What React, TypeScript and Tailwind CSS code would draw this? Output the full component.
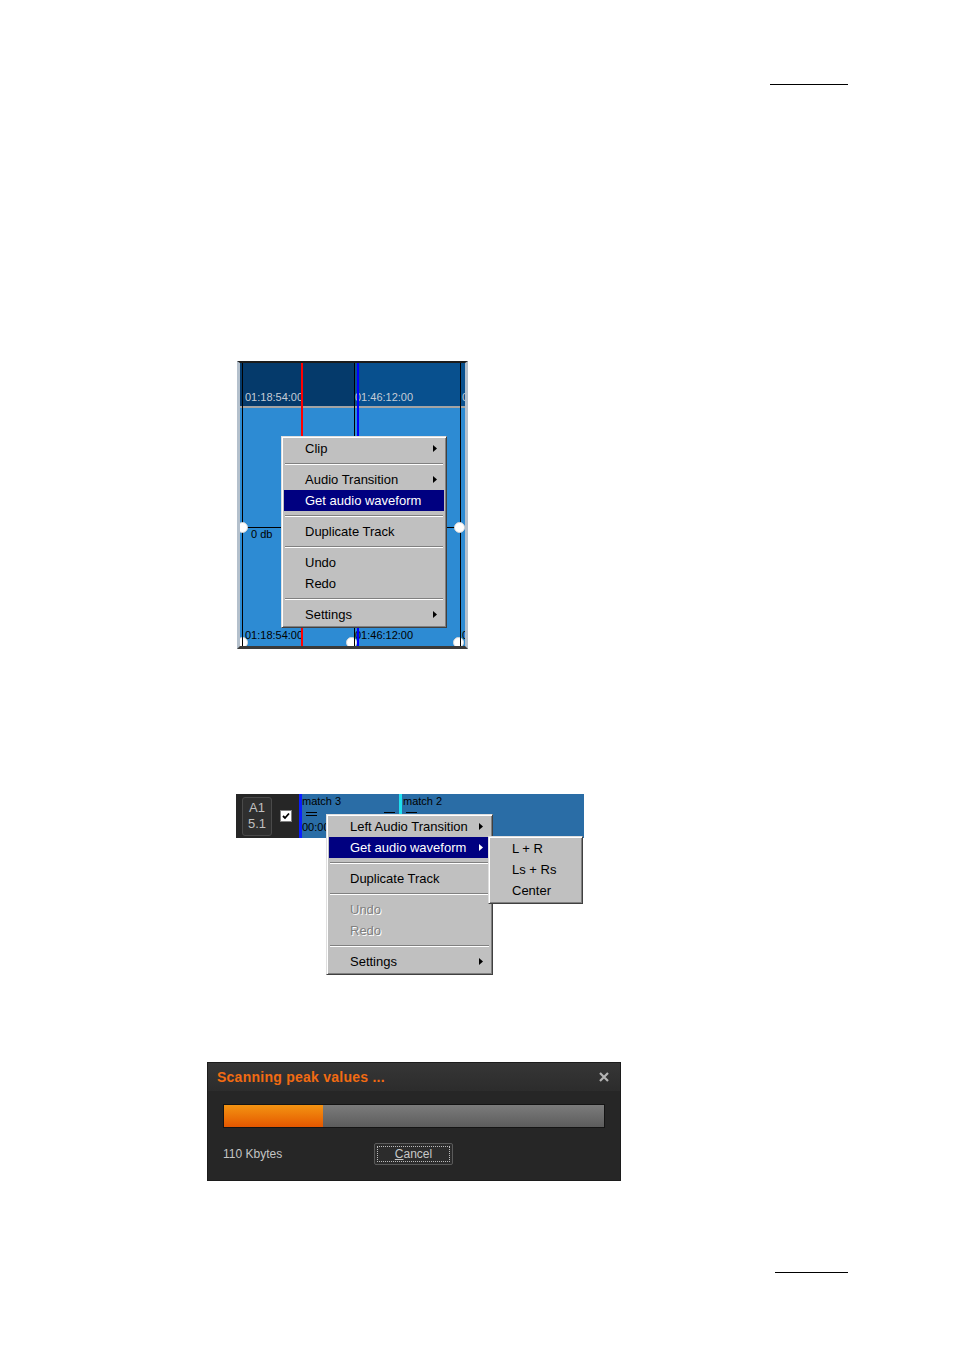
type Item = { label: string; sub?: boolean; active?: boolean; disabled?: boolean } | "sep";

function Arrow() {
  return (
    <svg width="4" height="7" viewBox="0 0 4 7" className="shrink-0">
      <path d="M0 0L4 3.5L0 7Z" fill="currentColor" />
    </svg>
  );
}

// windows-classic popup menu
function Menu({ items, className }: { items: Item[]; className: string }) {
  return (
    <div
      className={`absolute bg-[#c0c0c0] border border-[#dfdfdf] border-r-[#404040] border-b-[#404040] shadow-[inset_1px_1px_0_#ffffff,inset_-1px_-1px_0_#808080] px-[2px] pt-px pb-[2px] ${className}`}
    >
      {items.map((it, i) =>
        it === "sep" ? (
          <div key={i} className="h-[10px] flex flex-col justify-center mx-px">
            <div className="h-px bg-[#808080]" />
            <div className="h-px bg-white" />
          </div>
        ) : (
          <div
            key={i}
            className={`h-[21px] flex items-center pl-[21px] pr-[7px] text-[13px] leading-none ${
              it.active
                ? "bg-[#000080] text-white"
                : it.disabled
                ? "text-[#808080] [text-shadow:1px_1px_0_#ffffff]"
                : "text-black"
            }`}
          >
            <span className="flex-1 whitespace-nowrap">{it.label}</span>
            {it.sub && <Arrow />}
          </div>
        )
      )}
    </div>
  );
}

function Handle({ className }: { className: string }) {
  return <div className={`absolute w-[11px] h-[11px] rounded-full bg-white border border-[#d8d8d8] ${className}`} />;
}

function TimeRow({ color }: { color: string }) {
  return (
    <div className={`flex pl-[5px] text-[11px] leading-[13px] whitespace-nowrap ${color}`}>
      <span className="w-[56px] overflow-hidden">01:18:54:00</span>
      <span className="ml-[54px] w-[107px]">01:46:12:00</span>
      <span className="w-[3px] overflow-hidden">0</span>
    </div>
  );
}

function TimelineFigure() {
  return (
    <div className="ml-[237px] mt-[276px] w-[231px] h-[288px] border-t-2 border-t-[#1c1c1c] border-x-[3px] border-x-[#b4c0cc] border-b-[3px] border-b-[#3a3a3a]">
      <div className="relative h-full flex flex-col overflow-hidden">
        {/* ruler */}
        <div className="h-[43px] relative bg-[linear-gradient(to_right,#053a6b_114px,#08508e_114px)] pt-[28px]">
          <TimeRow color="text-[#c4ccd6]" />
        </div>
        <div className="h-[2px] bg-[#a4a4a4]" />
        {/* track */}
        <div className="flex-1 bg-[#2d8bd3] relative overflow-hidden flex flex-col justify-end pb-[4px]">
          <TimeRow color="text-black" />
          <Handle className="left-[-3px] top-[229px]" />
          <Handle className="left-[106px] top-[229px]" />
          <Handle className="left-[213px] top-[229px]" />
        </div>

        {/* clip boundaries and cursors */}
        <div className="absolute left-[2px] top-0 bottom-0 w-px bg-black" />
        <div className="absolute left-[114px] top-0 bottom-0 w-px bg-black" />
        <div className="absolute left-[220px] top-0 bottom-0 w-px bg-black" />
        <div className="absolute left-[61px] top-0 bottom-0 w-[2px] bg-[#ff0000]" />
        <div className="absolute left-[117px] top-0 bottom-0 w-[2px] bg-[#0000ff]" />

        {/* level line */}
        <div className="absolute left-[3px] top-[164px] w-[217px] h-px bg-black" />
        <div className="absolute left-[11px] top-[165px] text-[11px] leading-[13px] text-black">0 db</div>
        <Handle className="left-[-3px] top-[159px]" />
        <Handle className="left-[214px] top-[159px]" />

        <Menu
          className="left-[41px] top-[73px] w-[166px]"
          items={[
            { label: "Clip", sub: true },
            "sep",
            { label: "Audio Transition", sub: true },
            { label: "Get audio waveform", active: true },
            "sep",
            { label: "Duplicate Track" },
            "sep",
            { label: "Undo" },
            { label: "Redo" },
            "sep",
            { label: "Settings", sub: true },
          ]}
        />
      </div>
    </div>
  );
}

function TrackFigure() {
  return (
    <div className="ml-[236px] mt-[145px] relative w-[348px] h-[181px]">
      <div className="flex h-[44px]">
        <div className="w-[63px] bg-[#262626] flex items-center pl-[6px]">
          <div className="w-[30px] h-[39px] rounded-[3px] bg-[#2f2f2f] border border-[#4a4a4a] flex flex-col items-center justify-center text-[13px] leading-[16px] text-[#c0c0c0]">
            <span>A1</span>
            <span>5.1</span>
          </div>
          <div className="ml-[8px] w-[12px] h-[12px] bg-white border border-[#808080] flex items-center justify-center">
            <svg width="8" height="8" viewBox="0 0 8 8">
              <path d="M1 4L3 6L7 1.5" fill="none" stroke="#000" strokeWidth="1.8" />
            </svg>
          </div>
        </div>
        <div className="w-[3px] bg-[#0a1eff]" />
        <div className="flex-1 bg-[#2a6da6] flex overflow-hidden text-[11px] leading-[13px] text-black whitespace-nowrap">
          <div className="w-[97px] flex flex-col pt-px">
            <span className="h-[13px]">match 3</span>
            <div className="h-[13px] flex justify-between items-start pt-[4px] px-[4px]">
              <div className="w-[11px] h-[4px] border-y border-black" />
              <div className="w-[11px] h-px bg-black" />
            </div>
            <span>00:00:00</span>
          </div>
          <div className="flex-1 border-l-[3px] border-l-[#1ee0f0] flex flex-col pt-px pl-px">
            <span className="h-[13px]">match 2</span>
            <div className="pt-[4px] pl-[3px]">
              <div className="w-[11px] h-px bg-black" />
            </div>
          </div>
        </div>
      </div>
      <Menu
        className="left-[90px] top-[20px] w-[167px]"
        items={[
          { label: "Left Audio Transition", sub: true },
          { label: "Get audio waveform", active: true, sub: true },
          "sep",
          { label: "Duplicate Track" },
          "sep",
          { label: "Undo", disabled: true },
          { label: "Redo", disabled: true },
          "sep",
          { label: "Settings", sub: true },
        ]}
      />
      <Menu
        className="left-[252px] top-[42px] w-[95px]"
        items={[{ label: "L + R" }, { label: "Ls + Rs" }, { label: "Center" }]}
      />
    </div>
  );
}

function ScanDialog() {
  return (
    <div className="ml-[207px] mt-[87px] w-[414px] h-[119px] bg-[#262626] border border-[#1c1c1c] flex flex-col">
      <div className="h-[28px] shrink-0 bg-gradient-to-b from-[#363636] to-[#2c2c2c] flex items-center justify-between pl-[9px] pr-[11px]">
        <span className="text-[14px] font-bold text-[#f26b12] tracking-[0.25px] whitespace-nowrap">Scanning peak values ...</span>
        <svg width="10" height="10" viewBox="0 0 10 10">
          <path d="M1 1L9 9M9 1L1 9" stroke="#b4b4b4" strokeWidth="2.2" />
        </svg>
      </div>
      <div className="px-[15px] pt-[13px]">
        <div className="w-[382px] h-[24px] border border-[#141414] flex">
          <div className="w-[99px] bg-gradient-to-b from-[#f39312] to-[#e45600]" />
          <div className="flex-1 bg-gradient-to-b from-[#7c7c7c] to-[#5c5c5c]" />
        </div>
        <div className="mt-[15px] flex items-center h-[22px]">
          <span className="w-[151px] text-[12px] text-[#c4c4c4]">110 Kbytes</span>
          <div className="w-[79px] h-[22px] border border-[#5a5a5a] bg-[#2c2c2c] rounded-[2px] p-[2px]">
            <div className="h-full border border-dotted border-[#bdbdbd] flex items-center justify-center text-[12px] text-[#c8c8c8]">
              <span className="underline">C</span>ancel
            </div>
          </div>
        </div>
      </div>
    </div>
  );
}

export default function App() {
  return (
    <div className="w-[954px] h-[1350px] bg-white overflow-hidden font-['Liberation_Sans',Arial,sans-serif] pt-[84px]">
      <div className="ml-[770px] w-[78px] h-px bg-black" />
      <TimelineFigure />
      <TrackFigure />
      <ScanDialog />
      <div className="ml-[775px] mt-[91px] w-[73px] h-px bg-black" />
    </div>
  );
}
